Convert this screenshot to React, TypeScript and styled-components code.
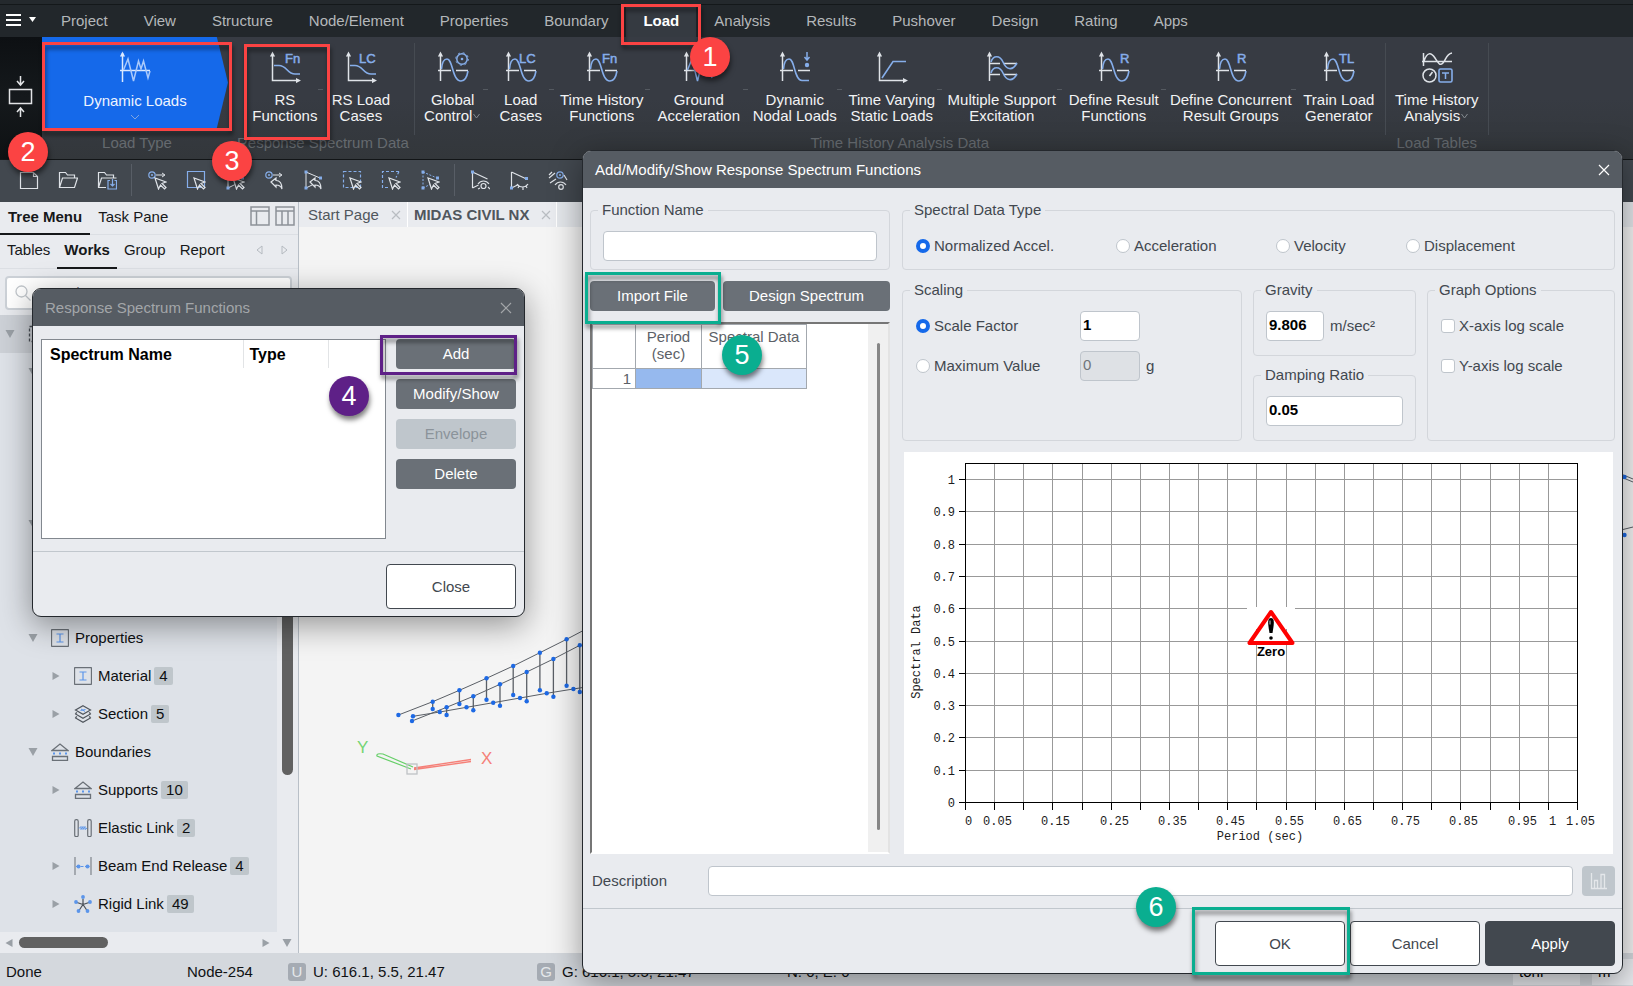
import React from "react";
import styled, { createGlobalStyle, css } from "styled-components";

const ink = "#42484f";
const pale = "#dfe3e8";
const blue = "#86aeea";
const linkBlue = "#5b95ea";

const GlobalStyle = createGlobalStyle`
  * { box-sizing: border-box; }
  body { margin: 0; font-family: "Liberation Sans", Arial, sans-serif; font-size: 15px; line-height: 18px; }
  button, input { font: inherit; }
  button { cursor: pointer; }
`;

/* ---------- shell ---------- */
const Shell = styled.div`
  position: relative;
  display: flex;
  flex-direction: column;
  min-height: 100vh;
  overflow: hidden;
  background: #f4f4f4;
`;

const MenuBar = styled.nav`
  display: flex;
  align-items: stretch;
  height: 37px;
  padding: 5px 0 0;
  background: #22272b;
  box-shadow: inset 0 4px 0 #24292d, inset 0 5px 0 #14181a;
`;

const MenuToggle = styled.button`
  display: flex;
  align-items: center;
  gap: 8px;
  width: 43px;
  padding: 0 0 3px 6px;
  border: 0;
  background: none;
`;

const MenuTab = styled.button<{ $active?: boolean }>`
  padding: 0 18px 1px;
  border: 0;
  background: ${(p) => (p.$active ? "#353a41" : "none")};
  color: ${(p) => (p.$active ? "#ffffff" : "#b4b7ba")};
  font-weight: ${(p) => (p.$active ? 700 : 400)};
  ${(p) => p.$active && css`padding: 0 17px 1px;`}
`;

const Ribbon = styled.div`
  display: flex;
  height: 123px;
  border-bottom: 1px solid #121517;
  background: linear-gradient(#373b43 0 50%, #33373b);
`;

const RibbonHandle = styled.button`
  width: 42px;
  padding: 0;
  border: 0;
  background: linear-gradient(#0d1013, #15191c 50%, #0e1113);
`;

const RibbonGroup = styled.section<{ $pad?: number }>`
  display: flex;
  flex-direction: column;
  align-items: center;
  padding: 0 ${(p) => p.$pad ?? 3}px;
`;

const RibbonRow = styled.div`
  display: flex;
  height: 97px;
`;

const GroupLabel = styled.div`
  color: #656a6f;
`;

const RibbonRule = styled.div`
  width: 1px;
  height: 92px;
  margin-top: 6px;
  background: #464b52;
`;

const RibbonItem = styled.button<{ $w: number; $last?: boolean }>`
  position: relative;
  display: flex;
  flex-direction: column;
  align-items: center;
  gap: 9px;
  width: ${(p) => p.$w}px;
  padding: 14px 0 0;
  border: 0;
  background: none;
  color: #f2f3f4;
  line-height: 16px;
  white-space: nowrap;
  &::after {
    content: "";
    position: absolute;
    right: 0;
    top: 52px;
    width: 5px;
    height: 1px;
    background: ${(p) => (p.$last ? "none" : "#555a61")};
  }
`;

const LoadType = styled.button`
  display: flex;
  flex-direction: column;
  align-items: center;
  width: 186px;
  height: 91px;
  margin-right: 4px;
  padding: 14px 0 0;
  border: 0;
  background: #1569ea;
  clip-path: polygon(0 0, 94% 0, 100% 50%, 94% 100%, 0 100%);
  color: #eef4ff;
  span { margin: 9px 0 4px; }
`;

const ToolBar = styled.div`
  display: flex;
  align-items: center;
  height: 42px;
  padding: 0 0 2px 9px;
  background: #42484f;
`;

const ToolButton = styled.button`
  width: 39px;
  height: 30px;
  padding: 0;
  border: 0;
  background: none;
  svg { display: block; margin: auto; }
`;

const ToolRule = styled.div`
  width: 1px;
  height: 32px;
  margin: 0 5px;
  background: #585e66;
`;

const Workspace = styled.div`
  display: flex;
  flex: 1;
  min-height: 0;
`;

/* ---------- sidebar ---------- */
const Sidebar = styled.aside`
  display: flex;
  flex-direction: column;
  width: 299px;
  border-right: 1px solid #b8bfc7;
  background: #e9ebef;
`;

const PaneTabs = styled.div<{ $h: number }>`
  display: flex;
  height: ${(p) => p.$h}px;
  box-shadow: inset 0 -1px 0 #dcdfe4;
`;

const PaneTab = styled.button<{ $active?: boolean; $pad: number }>`
  padding: 0 ${(p) => p.$pad}px 2px;
  border: 0;
  border-bottom: 2px solid ${(p) => (p.$active ? "#16181a" : "transparent")};
  background: none;
  color: #16181a;
  font-weight: ${(p) => (p.$active ? 700 : 400)};
`;

const PaneTools = styled.div<{ $gap: number; $end: number }>`
  display: flex;
  align-items: center;
  gap: ${(p) => p.$gap}px;
  margin: 0 ${(p) => p.$end}px 5px auto;
`;

const SearchBox = styled.label`
  display: flex;
  align-items: center;
  gap: 6px;
  height: 34px;
  margin: 7px 6px 5px 5px;
  padding: 0 8px;
  border: 2px solid #ccd1d7;
  border-radius: 4px;
  background: #fff;
  input { flex: 1; min-width: 0; padding: 0; border: 0; outline: 0; }
  input::placeholder { color: #70767d; }
`;

const TreeArea = styled.div`
  display: flex;
  flex: 1;
`;

const Tree = styled.ul`
  flex: 1;
  margin: 0;
  padding: 0;
  background: #dee2e8;
  list-style: none;
`;

const TreeRow = styled.li<{ $level: number; $selected?: boolean }>`
  display: flex;
  align-items: center;
  height: 38px;
  padding-left: ${(p) => 4 + p.$level * 23}px;
  background: ${(p) => (p.$selected ? "#cdd1d7" : "none")};
  color: #0e1012;
`;

const TreeToggle = styled.span`
  display: flex;
  justify-content: center;
  width: 12px;
  margin-right: 12px;
`;

const TreeIcon = styled.span`
  display: flex;
  width: 20px;
  margin-right: 4px;
`;

const Count = styled.span`
  margin-left: 3px;
  padding: 0 5px;
  border-radius: 2px;
  background: #bfc6cb;
`;

const TrackY = styled.div`
  display: flex;
  justify-content: flex-end;
  width: 21px;
  padding-right: 5px;
`;

const ThumbY = styled.div`
  width: 11px;
  height: 460px;
  border-radius: 6px;
  background: #616161;
`;

const TrackX = styled.div`
  display: flex;
  align-items: center;
  height: 21px;
  padding: 0 6px 0 4px;
`;

const ThumbX = styled.div`
  width: 89px;
  height: 11px;
  margin: 0 auto 0 5px;
  border-radius: 6px;
  background: #616161;
`;

const ScrollEnds = styled.div`
  display: flex;
  align-items: center;
  gap: 11px;
`;

/* ---------- document area ---------- */
const Main = styled.main`
  display: flex;
  flex: 1;
  flex-direction: column;
  min-width: 0;
`;

const DocTabs = styled.div`
  display: flex;
  height: 25px;
  background: #e4e7eb;
`;

const DocTab = styled.button<{ $active?: boolean }>`
  display: flex;
  align-items: center;
  gap: 12px;
  padding: 0 6px 0 9px;
  border: 0;
  border-right: 1px solid #fff;
  background: #e9ebef;
  color: #50565d;
  font-weight: ${(p) => (p.$active ? 700 : 400)};
  white-space: nowrap;
  ${(p) => p.$active && css`padding: 0 5px 0 6px;`}
`;

const Canvas = styled.div`
  display: flex;
  justify-content: space-between;
  flex: 1;
  background: #f4f4f4;
`;

const StatusBar = styled.footer`
  display: grid;
  grid-template-columns: 181px 101px 249px 250px 1fr auto;
  align-items: center;
  height: 33px;
  padding: 4px 0 0 6px;
  background: #d4d8dd;
  color: #101214;
  white-space: nowrap;
`;

const StatusItem = styled.div`
  display: flex;
  align-items: center;
  gap: 7px;
`;

const KeyCap = styled.span`
  width: 18px;
  border-radius: 3px;
  background: #a5abb3;
  color: #e4e7ea;
  text-align: center;
`;

const UnitPicker = styled.button<{ $w: number }>`
  width: ${(p) => p.$w}px;
  height: 26px;
  margin-left: 5px;
  border: 0;
  background: #e9ebef;
  text-align: left;
`;

/* ---------- dialogs ---------- */
const Dialog = styled.section<{ $top: number; $left: number; $right?: number; $w?: number }>`
  position: absolute;
  top: ${(p) => p.$top}px;
  left: ${(p) => p.$left}px;
  ${(p) => (p.$w ? `width: ${p.$w}px;` : `right: ${p.$right}px;`)}
  border: 1px solid #24282d;
  border-radius: 9px;
  background: #e9ebef;
  box-shadow: 0 8px 32px rgba(0, 0, 0, 0.4);
  color: ${ink};
`;

const TitleBar = styled.header<{ $idle?: boolean }>`
  display: flex;
  align-items: center;
  justify-content: space-between;
  height: 37px;
  padding: 0 12px;
  border-radius: 8px 8px 0 0;
  background: #565c63;
  color: ${(p) => (p.$idle ? "#a3a6a9" : "#ffffff")};
  h2 { margin: 0; font-size: 15px; font-weight: 400; }
  button { display: flex; padding: 0; border: 0; background: none; color: inherit; }
`;

const Action = styled.button<{ $w?: number }>`
  height: 30px;
  ${(p) => (p.$w ? `width: ${p.$w}px;` : "flex: 1;")}
  border: 0;
  border-radius: 4px;
  background: #6a7077;
  color: #fff;
  &:disabled { background: #bfc6cc; color: #8b939a; }
`;

const DialogFooter = styled.footer<{ $end: number }>`
  display: flex;
  justify-content: flex-end;
  gap: 5px;
  padding: 12px ${(p) => p.$end}px 7px;
  border-top: 1px solid #c1c7cd;
`;

const FooterButton = styled.button<{ $primary?: boolean }>`
  width: 130px;
  height: 45px;
  border: 1px solid ${ink};
  border-radius: 4px;
  background: ${(p) => (p.$primary ? ink : "#fff")};
  color: ${(p) => (p.$primary ? "#fff" : ink)};
`;

const ListBody = styled.div`
  display: flex;
  gap: 10px;
  padding: 13px 8px 12px;
`;

const SpectrumList = styled.div`
  flex: 1;
  height: 200px;
  border: 1px solid #82888f;
  background: #fff;
`;

const SpectrumTable = styled.table`
  border-collapse: collapse;
  color: #000;
  font-size: 16px;
  th {
    height: 28px;
    padding: 1px 0 0 6px;
    border-right: 1px solid #e2e4e6;
    text-align: left;
  }
  th:first-child { width: 201px; padding-left: 8px; }
  th:nth-child(2) { width: 85px; }
`;

const Stack = styled.div`
  display: flex;
  flex-direction: column;
  gap: 10px;
  width: 120px;
  button { flex: none; }
`;

const SpectrumBody = styled.div`
  display: flex;
  gap: 12px;
  padding: 13px 7px 0;
`;

const LeftColumn = styled.div`
  display: flex;
  flex-direction: column;
  gap: 11px;
  width: 300px;
`;

const RightColumn = styled.div`
  display: flex;
  flex: 1;
  flex-direction: column;
  gap: 11px;
  min-width: 0;
`;

const Row = styled.div<{ $gap: number }>`
  display: flex;
  gap: ${(p) => p.$gap}px;
`;

const Group = styled.fieldset<{ $w?: number; $grow?: boolean; $bottom?: number }>`
  ${(p) => p.$w && `width: ${p.$w}px;`}
  ${(p) => p.$grow && "flex: 1;"}
  min-width: 0;
  margin: 0;
  padding: 12px 12px ${(p) => p.$bottom ?? 8}px;
  border: 1px solid #d3d6db;
  border-radius: 4px;
  legend { margin-left: -5px; padding: 0 4px; }
`;

const TextBox = styled.input<{ $w?: number }>`
  width: ${(p) => (p.$w ? `${p.$w}px` : "100%")};
  height: 30px;
  padding: 0 2px 4px;
  border: 1px solid #bfc5cc;
  border-radius: 4px;
  outline: 0;
  background: #fff;
  color: #000;
  font-weight: 700;
  &:disabled { background: #dee1e5; color: #70757a; font-weight: 400; }
`;

const Choices = styled.div<{ $cols: string }>`
  display: grid;
  grid-template-columns: ${(p) => p.$cols};
  grid-auto-rows: 30px;
  row-gap: 10px;
  align-items: center;
`;

const Choice = styled.label`
  display: flex;
  align-items: center;
  gap: 4px;
  white-space: nowrap;
  input {
    appearance: none;
    width: 14px;
    height: 14px;
    margin: 0 0 0 1px;
    border: 1px solid #bfc5cc;
    border-radius: 3px;
    background: #fff;
  }
  input[type="radio"] { border-radius: 50%; }
  input[type="radio"]:checked { border: 4px solid #1569ea; }
`;

const Unit = styled.span`
  padding-left: 6px;
`;

const Column = styled.div`
  display: flex;
  flex-direction: column;
  gap: 10px;
  width: 163px;
`;

const InlineField = styled.div`
  display: flex;
  align-items: center;
`;

const DataPanel = styled.div`
  display: flex;
  justify-content: space-between;
  flex: 1;
  border: 2px solid;
  border-color: #767676 #e3e3e3 #fff #767676;
  background: #fff;
`;

const DataTable = styled.table`
  align-self: flex-start;
  border-collapse: collapse;
  color: #5c6167;
  line-height: 17px;
  th, td { padding: 0; border: 1px solid #a3a8ae; }
  th { height: 44px; padding-top: 3px; font-weight: 400; vertical-align: top; }
  td { height: 20px; }
  td:first-child { padding-right: 4px; text-align: right; }
`;

const Cell = styled.td<{ $tone: string }>`
  background: ${(p) => p.$tone};
`;

const PanelTrack = styled.div`
  display: flex;
  justify-content: center;
  width: 20px;
  padding: 19px 0 22px;
  background: #f0f0f0;
  &::before { content: ""; width: 3px; border-radius: 2px; background: #868686; }
`;

const ChartFrame = styled.div`
  margin: 0 2px;
  background: #fff;
  svg { display: block; width: 100%; }
`;

const DescriptionRow = styled.div`
  display: flex;
  align-items: center;
  margin: 12px 7px;
  label { width: 118px; padding-left: 2px; }
  input { flex: 1; }
`;

const PlotButton = styled.button`
  display: flex;
  align-items: center;
  justify-content: center;
  width: 33px;
  height: 30px;
  margin-left: 9px;
  border: 0;
  border-radius: 4px;
  background: #bfc6cc;
`;

/* ---------- step markers ---------- */
const Frame = styled.div<{ $x: number; $y: number; $w: number; $h: number; $c: string; $fromRight?: boolean }>`
  position: absolute;
  z-index: 1;
  top: ${(p) => p.$y}px;
  ${(p) => (p.$fromRight ? "right" : "left")}: ${(p) => p.$x}px;
  width: ${(p) => p.$w}px;
  height: ${(p) => p.$h}px;
  border: 3px solid ${(p) => p.$c};
  filter: drop-shadow(1px 4px 2px rgba(0, 0, 0, 0.5));
  pointer-events: none;
`;

const Step = styled.div<{ $x: number; $y: number; $c: string; $fromRight?: boolean }>`
  position: absolute;
  z-index: 2;
  top: ${(p) => p.$y}px;
  ${(p) => (p.$fromRight ? "right" : "left")}: ${(p) => p.$x}px;
  width: 40px;
  height: 40px;
  border-radius: 50%;
  background: ${(p) => p.$c};
  box-shadow: 1px 4px 5px rgba(0, 0, 0, 0.5);
  color: #fff;
  font-size: 27px;
  line-height: 40px;
  text-align: center;
`;

const RED = "#fb4343";
const PURPLE = "#5e2087";
const TEAL = "#0aae90";

/* ---------- drawings ---------- */
const Svg = ({ size = 32, h, children }: { size?: number; h?: number; children: React.ReactNode }) => (
  <svg width={size} height={h ?? size} viewBox={`0 0 ${size} ${h ?? size}`} fill="none" aria-hidden="true">
    {children}
  </svg>
);

const Tag = ({ x, t }: { x: number; t: string }) => (
  <text x={x} y="12" fontSize="13" fontFamily="Liberation Sans, Arial, sans-serif" fill={blue} stroke={blue} strokeWidth="0.5">
    {t}
  </text>
);

const UpAxis = () => (
  <>
    <path d="M3.5 3v27" stroke={pale} strokeWidth="1.5" />
    <path d="M3.5 0.5l2.6 5H0.9z" fill={pale} />
  </>
);

const CornerAxis = () => (
  <>
    <path d="M3.5 3v26.500H28" stroke={pale} strokeWidth="1.5" />
    <path d="M3.5 0.5l2.6 5H0.9zM32 29.500l-5 -2.600v5.200z" fill={pale} />
  </>
);

const Wave = ({ end = "M4.500 18C5 12 7 8 10 8c6 0 5 22 14 22c4 0 6-4 7-10" }: { end?: string }) => (
  <>
    <UpAxis />
    <path d="M1 19.500h13M19 19.500h12" stroke={pale} strokeWidth="1.5" />
    <path d={end} stroke={blue} strokeWidth="1.6" />
  </>
);

const Spike = () => (
  <>
    <path d="M3.500 2v29M1 19.500h30" stroke="#dbe9ff" strokeWidth="1.500" />
    <path d="M3.500 0.500l2.600 5H0.900z" fill="#dbe9ff" />
    <path d="M4.500 19L9 8l5.500 22 5-20 2.500 8 2.500-8 4.500 17 2-7" stroke="#a9c9fb" strokeWidth="1.500" />
  </>
);

const icons: Record<string, React.ReactNode> = {
  rsFn: <><CornerAxis /><path d="M5 14.500h5c8 0 8 8.500 16 8.500h5" stroke={blue} strokeWidth="1.600" /><Tag x={16} t="Fn" /></>,
  rsLc: <><CornerAxis /><path d="M5 14.500h5c8 0 8 8.500 16 8.500h5" stroke={blue} strokeWidth="1.600" /><Tag x={14} t="LC" /></>,
  gear: <><Wave /><circle cx="25" cy="8" r="5.200" stroke={blue} strokeWidth="1.500" /><circle cx="25" cy="8" r="6.300" stroke={blue} strokeWidth="1" strokeDasharray="2 2.950" /><circle cx="25" cy="8" r="1.300" fill={blue} /></>,
  lc: <><Wave /><Tag x={14} t="LC" /></>,
  fn: <><Wave /><Tag x={16} t="Fn" /></>,
  ground: <><UpAxis /><path d="M1 19.500h30" stroke={pale} strokeWidth="1.500" /><path d="M4.500 19L9 8l5.500 22 5-20 2.500 8 2.500-8 4.500 17" stroke={blue} strokeWidth="1.500" /></>,
  nodal: <><Wave end="M4.500 18C5 12 7 8 10 8c6 0 5 21.500 13 21.500h7" /><path d="M28 1v7M25.500 6l2.500 3 2.500-3" stroke={blue} strokeWidth="1.500" /><circle cx="28" cy="14" r="2.200" fill={blue} /></>,
  varying: <><CornerAxis /><path d="M6 27L17 10.500h13" stroke={blue} strokeWidth="1.600" /></>,
  multi: <><UpAxis /><path d="M3 12.500h11M18 12.500h13M3 23.500h11M18 23.500h13" stroke={pale} strokeWidth="1.500" /><path d="M5 11C7 4 14 4 17 11s9 10 14 1M5 22c2-7 9-7 12 0s9 10 14 1" stroke={blue} strokeWidth="1.600" /></>,
  r: <><Wave /><Tag x={22} t="R" /></>,
  tl: <><Wave /><Tag x={16} t="TL" /></>,
  table: <><path d="M2.500 2v13M1 10.500h30M3 10C6 1 10 1 14 7s5 8 8 5 3-9 9-10" stroke={pale} strokeWidth="1.500" /><circle cx="8.500" cy="24.500" r="6.500" stroke={pale} strokeWidth="1.500" /><path d="M8.500 25l3-4" stroke={pale} strokeWidth="1.500" /><rect x="18" y="18" width="13" height="13" rx="1.500" stroke={blue} strokeWidth="1.600" /><path d="M21 22h7M24.500 22v6" stroke={blue} strokeWidth="1.500" /></>,
};

const ribbonItems = (defs: [string, string, string, number, boolean?][]) =>
  defs.map(([icon, a, b, w, drop], i) => (
    <RibbonItem key={icon + a} $w={w} $last={i === defs.length - 1}>
      <Svg>{icons[icon]}</Svg>
      <span>
        {a}
        <br />
        {b}
        {drop && <Svg size={9} h={8}><path d="M1.500 1l3 4 3-4" stroke="#858a90" /></Svg>}
      </span>
    </RibbonItem>
  ));

const Cursor = () => <path d="M8 8l3.500 11 2-4 4 4 1.500-1.500-4-4 4-1.500z" stroke={pale} strokeWidth="1.200" fill="#42484f" />;
const BackArrow = () => <path d="M7 12l5-4v2.500c5 0 6 4 6 8.500-1-3-3-4-6-4v2z" stroke={pale} strokeWidth="1.200" fill="#42484f" />;
const Ring = ({ x = 5, y = 5 }: { x?: number; y?: number }) => (
  <><circle cx={x} cy={y} r="3.200" stroke={blue} strokeWidth="1.200" /><circle cx={x} cy={y} r="1" fill={blue} /></>
);
const Dots = ({ dash }: { dash?: boolean }) => (
  <><path d="M3 2v16M3 2l14 6M3 18l8-4" stroke={dash ? blue : pale} strokeDasharray={dash ? "2 1.500" : undefined} /><path d="M1.500 0.500h3v3h-3zM16 6.500h3v3h-3zM1.500 16.500h3v3h-3z" fill={blue} /></>
);

const toolIcons: React.ReactNode[] = [
  <path d="M1.500 2.500h13l4 4v12h-17zM14.500 2.500v4h4" stroke={pale} strokeWidth="1.200" />,
  <path d="M1.500 17.500v-15h6l2 2.500h7v3M1.500 17.500l3-9.500h15l-3 9.500z" stroke={pale} strokeWidth="1.200" />,
  <><path d="M9 17.500H1.500v-15h6l2 2.500h7v3M1.500 17.500l3-9.500h15" stroke={pale} strokeWidth="1.200" /><path d="M13 10.500h-2v8.500h8.500v-8.500h-2M15.500 9v7M13.500 14l2 2 2-2" stroke={blue} strokeWidth="1.200" /></>,
  "rule",
  <><Ring /><path d="M9 5h8M15 3l3 2-3 2" stroke={pale} /><Cursor /></>,
  <><path d="M1.500 1.500h17v16h-17z" stroke={blue} strokeWidth="1.200" /><Cursor /></>,
  <><Dots /><Cursor /></>,
  <><Ring /><path d="M9 5h8M15 3l3 2-3 2" stroke={pale} /><BackArrow /></>,
  <><Dots /><BackArrow /></>,
  <><path d="M1.500 1.500h17v16h-17z" stroke={blue} strokeWidth="1.200" strokeDasharray="3 2" /><Cursor /></>,
  <><path d="M18 1.500H1.500v16H9M18 1.500l-3 6" stroke={blue} strokeWidth="1.200" strokeDasharray="3 2" /><Cursor /></>,
  <><Dots dash /><Cursor /></>,
  "rule",
  <><path d="M2.500 2v16M2.500 2l15 7M2.500 18l6-3M8 14c3-4 8-4 11 0M10 18l-2 1M18 17l2 2" stroke={pale} strokeWidth="1.200" /><circle cx="13.500" cy="16" r="2.500" stroke={pale} strokeWidth="1.200" /><path d="M1 0.500h3v3H1z" fill={blue} /></>,
  <><path d="M2.500 2v16M2.500 2l15 7M2.500 18l6-3M8 14c3 4 8 4 11 0M10 16l-1 2M14 17v3M17 16l1 2" stroke={pale} strokeWidth="1.200" /><path d="M16 7h3v3h-3zM1 16.500h3v3H1z" fill={blue} /></>,
  <><Ring x={12} /><path d="M1 8l6-5M2 13l6-4M1 5l3-3M7 15c3-4 8-4 11 0M16 5l3 5" stroke={pale} strokeWidth="1.200" /><circle cx="13" cy="17" r="2.300" stroke={pale} strokeWidth="1.200" /></>,
];

const treeIcons: Record<string, React.ReactNode> = {
  beam: <><rect x="0.500" y="0.500" width="17" height="17" rx="1" stroke="#6a7077" strokeWidth="1.300" /><path d="M5.500 5h7M9 5v8M5.500 13h7" stroke={linkBlue} strokeWidth="1.200" /></>,
  section: <><path d="M9 0.700l7.500 4.300L9 9.300 1.500 5zM1.500 8.500v0.500L9 13.300 16.500 9v-0.500M1.500 8.500L3 7.500M16.500 8.500L15 7.500M1.500 12.500v0.500L9 17.300 16.500 13v-0.500M1.500 12.500l1.500-1M16.500 12.500l-1.500-1" stroke="#4f555c" strokeWidth="1.200" /><path d="M6.500 5.500l5-1M7 4l4 2.500" stroke={linkBlue} /></>,
  support: <><path d="M1 7.500L9 1l8 6.500zM1.500 13.500h15v4h-15z" stroke="#6a7077" strokeWidth="1.300" /><path d="M2 10.500h14" stroke={linkBlue} strokeWidth="2" strokeDasharray="2 4" /></>,
  elastic: <><rect x="0.700" y="0.700" width="3.500" height="17" rx="1.500" stroke="#6a7077" strokeWidth="1.200" /><rect x="13.700" y="0.700" width="3.500" height="17" rx="1.500" stroke="#6a7077" strokeWidth="1.200" /><path d="M5 9.500l2-2v3l2-3v3l2-3v3l2-1.500" stroke={linkBlue} /></>,
  release: <><path d="M1 0v18M17 0v18" stroke="#868c93" strokeWidth="1.300" /><path d="M2 9.500h14" stroke={linkBlue} strokeDasharray="3 1.500" /><circle cx="4.500" cy="9.500" r="2" fill={linkBlue} /><circle cx="13.500" cy="9.500" r="2" fill={linkBlue} /></>,
  rigid: <><path d="M9 9.500V4M9 9.500L3 7.500M9 9.500l6-2M9 9.500l-4 6M9 9.500l4 6" stroke="#4a5057" strokeWidth="1.200" />{[[9, 2], [2, 7], [16, 7], [4.5, 16], [13.5, 16]].map(([x, y]) => <circle key={`${x}-${y}`} cx={x} cy={y} r="1.900" fill={linkBlue} />)}</>,
  group: <path d="M1.500 1.500h15v15h-15z" stroke="#4a5057" strokeWidth="1.300" strokeDasharray="3 2" />,
};

type Node = { level: number; icon?: string; text?: string; count?: number; open?: boolean; shut?: boolean; selected?: boolean };
const nodes: Node[] = [
  { level: 0, open: true, icon: "group", selected: true },
  { level: 1, open: true },
  { level: 2 },
  { level: 2 },
  { level: 2 },
  { level: 1, open: true },
  { level: 2 },
  { level: 2 },
  { level: 1, open: true, icon: "beam", text: "Properties" },
  { level: 2, shut: true, icon: "beam", text: "Material", count: 4 },
  { level: 2, shut: true, icon: "section", text: "Section", count: 5 },
  { level: 1, open: true, icon: "support", text: "Boundaries" },
  { level: 2, shut: true, icon: "support", text: "Supports", count: 10 },
  { level: 2, icon: "elastic", text: "Elastic Link", count: 2 },
  { level: 2, shut: true, icon: "release", text: "Beam End Release", count: 4 },
  { level: 2, shut: true, icon: "rigid", text: "Rigid Link", count: 49 },
];

const Triangle = ({ dir }: { dir: "down" | "right" | "left" }) => (
  <Svg size={10}>
    <path d={{ down: "M0.500 1h9L5 9z", right: "M1.500 1v8l7-4z", left: "M8.500 1v8l-7-4z" }[dir]} fill="#9aa0a6" />
  </Svg>
);

const Cross = ({ size = 12, color = "currentColor" }: { size?: number; color?: string }) => (
  <Svg size={size}>
    <path d={`M1 1L${size - 1} ${size - 1}M${size - 1} 1L1 ${size - 1}`} stroke={color} strokeWidth="1.200" />
  </Svg>
);

const top1 = [[99.4, 488], [133.7, 474.7], [160.4, 463.3], [187.5, 451.3], [214.2, 439], [240.9, 425.7], [267.6, 412.3], [290, 400.5]];
const top2 = [[113, 494], [147.6, 480.3], [174.3, 469.3], [201, 457.3], [227.7, 445], [254.4, 432], [280.8, 418.3]];
const base = [[114, 489.3], [140.8, 485], [167.5, 480.3], [194.2, 475.7], [221, 471], [247.7, 466.3], [274.4, 462], [290, 459.5]];
const foot1 = [482, 477, 472.7, 468, 463.3, 458.7];
const foot2 = [488, 483.3, 478.7, 474.3, 469.7, 465];

const Model = () => {
  const legs = [
    ...foot1.map((y, i) => [top1[i + 1][0], top1[i + 1][1], y]),
    ...foot2.map((y, i) => [top2[i + 1][0], top2[i + 1][1], y]),
  ];
  return (
    <svg width="300" height="600" viewBox="0 0 300 600" fill="none" role="img" aria-label="Bridge model">
      {[top1, top2, base].map((line, i) => (
        <polyline key={i} points={line.map((p) => p.join()).join(" ")} stroke="#5a5f66" />
      ))}
      {legs.map(([x, a, b]) => <path key={x} d={`M${x} ${a}V${b}`} stroke="#5a5f66" strokeWidth="1.300" />)}
      {[...top1, ...top2, ...base, ...legs.map(([x, , b]) => [x, b])].map(([x, y]) => (
        <circle key={`${x}-${y}`} cx={x} cy={y} r="2.200" fill="#1d69e4" />
      ))}
      <path d="M112 542L78 529q-1-3 6-2l30 13" stroke="#66cf68" strokeWidth="1.200" />
      <path d="M115 541l57-8.500M115 542.500l57-8" stroke="#f58078" strokeWidth="1.300" />
      <rect x="108" y="537" width="10" height="10" stroke="#bfc2c5" strokeWidth="1.300" />
      <text x="58" y="526" fontSize="17" fill="#74d474">Y</text>
      <text x="182" y="537" fontSize="17" fill="#f58078">X</text>
    </svg>
  );
};

const Chart = () => {
  const x = (i: number) => Math.round(61 + (i * 612) / 21) + 0.5;
  const y = (i: number) => Math.round(350 - i * 32.3) + 0.5;
  const cols = Array.from({ length: 22 }, (_, i) => i);
  const rows = Array.from({ length: 11 }, (_, i) => i);
  const labelled = cols.filter((i) => i === 0 || i === 20 || i % 2 === 1);
  return (
    <svg viewBox="0 0 709 402" fill="none" fontFamily="Liberation Mono, monospace" fontSize="12" role="img" aria-label="Spectral data chart">
      {cols.map((i) => <path key={i} d={`M${x(i)} 11.500V350`} stroke="#999" />)}
      {rows.map((i) => <path key={i} d={`M61.500 ${y(i)}H673`} stroke="#999" />)}
      {cols.map((i) => <path key={i} d={`M${x(i)} 350v8`} stroke="#000" />)}
      {rows.map((i) => <path key={i} d={`M55 ${y(i)}h6`} stroke="#000" />)}
      <rect x="61.500" y="11.500" width="612" height="339" stroke="#000" />
      <g fill="#1c1c1c">
        {labelled.map((i) => (
          <text key={i} x={x(i) + (i === 20 ? 4 : 3)} y="373" textAnchor="middle">{i * 5 / 100}</text>
        ))}
        {rows.map((i) => <text key={i} x="51" y={y(i) + 4} textAnchor="end">{i / 10}</text>)}
        <text x="356" y="388" textAnchor="middle">Period (sec)</text>
        <text x="16" y="200" textAnchor="middle" transform="rotate(-90 16 200)">Spectral Data</text>
      </g>
      <path d="M343 155h48v22h-10v36h-28v-36h-10z" fill="#fff" />
      <path d="M353 177v-2h28v2z" fill="#fff" />
      <path d="M367 160l-21.500 31h43z" fill="#fff" stroke="#f00" strokeWidth="4" strokeLinejoin="round" />
      <path d="M367 166c4 0 3 6 1.500 15h-3c-1.500-9-2.500-15 1.500-15z" fill="#000" />
      <path d="M366 168.500v4" stroke="#fff" strokeWidth="0.800" />
      <circle cx="367" cy="186" r="1.800" fill="#000" />
      <text x="367" y="204" textAnchor="middle" fontFamily="Liberation Sans, Arial, sans-serif" fontSize="13" fontWeight="700" fill="#000">Zero</text>
    </svg>
  );
};

const ListDialog = () => (
  <Dialog $top={288} $left={32} $w={493} aria-label="Response Spectrum Functions">
    <TitleBar $idle>
      <h2>Response Spectrum Functions</h2>
      <button aria-label="Close"><Cross /></button>
    </TitleBar>
    <ListBody>
      <SpectrumList>
        <SpectrumTable>
          <thead>
            <tr><th>Spectrum Name</th><th>Type</th></tr>
          </thead>
        </SpectrumTable>
      </SpectrumList>
      <Stack>
        <Action $w={120}>Add</Action>
        <Action $w={120}>Modify/Show</Action>
        <Action $w={120} disabled>Envelope</Action>
        <Action $w={120}>Delete</Action>
      </Stack>
    </ListBody>
    <DialogFooter $end={8}>
      <FooterButton>Close</FooterButton>
    </DialogFooter>
    <Frame $x={347} $y={46} $w={137} $h={40} $c={PURPLE} />
    <Step $x={296} $y={87} $c={PURPLE}>4</Step>
  </Dialog>
);

const SpectrumDialog = () => (
  <Dialog $top={150} $left={582} $right={10} aria-label="Add/Modify/Show Response Spectrum Functions">
    <TitleBar>
      <h2>Add/Modify/Show Response Spectrum Functions</h2>
      <button aria-label="Close"><Cross /></button>
    </TitleBar>
    <SpectrumBody>
      <LeftColumn>
        <Group>
          <legend>Function Name</legend>
          <TextBox aria-label="Function Name" />
        </Group>
        <Row $gap={8}>
          <Action $w={125}>Import File</Action>
          <Action>Design Spectrum</Action>
        </Row>
        <DataPanel>
          <DataTable>
            <colgroup>
              <col width="43" /><col width="66" /><col width="105" />
            </colgroup>
            <thead>
              <tr><th /><th>Period<br />(sec)</th><th>Spectral Data</th></tr>
            </thead>
            <tbody>
              <tr><td>1</td><Cell $tone="#96b9ee" /><Cell $tone="#dae7fb" /></tr>
            </tbody>
          </DataTable>
          <PanelTrack />
        </DataPanel>
      </LeftColumn>
      <RightColumn>
        <Group>
          <legend>Spectral Data Type</legend>
          <Choices $cols="200px 160px 130px 1fr">
            <Choice><input type="radio" name="kind" defaultChecked />Normalized Accel.</Choice>
            <Choice><input type="radio" name="kind" />Acceleration</Choice>
            <Choice><input type="radio" name="kind" />Velocity</Choice>
            <Choice><input type="radio" name="kind" />Displacement</Choice>
          </Choices>
        </Group>
        <Row $gap={11}>
          <Group $grow>
            <legend>Scaling</legend>
            <Choices $cols="165px 60px 1fr">
              <Choice><input type="radio" name="scaling" defaultChecked />Scale Factor</Choice>
              <TextBox $w={60} defaultValue="1" aria-label="Scale Factor" />
              <span />
              <Choice><input type="radio" name="scaling" />Maximum Value</Choice>
              <TextBox $w={60} defaultValue="0" disabled aria-label="Maximum Value" />
              <Unit>g</Unit>
            </Choices>
          </Group>
          <Column>
            <Group $bottom={14}>
              <legend>Gravity</legend>
              <InlineField>
                <TextBox $w={58} defaultValue="9.806" aria-label="Gravity" />
                <Unit>m/sec²</Unit>
              </InlineField>
            </Group>
            <Group $bottom={14}>
              <legend>Damping Ratio</legend>
              <InlineField>
                <TextBox defaultValue="0.05" aria-label="Damping Ratio" />
              </InlineField>
            </Group>
          </Column>
          <Group $w={188}>
            <legend>Graph Options</legend>
            <Choices $cols="1fr">
              <Choice><input type="checkbox" />X-axis log scale</Choice>
              <Choice><input type="checkbox" />Y-axis log scale</Choice>
            </Choices>
          </Group>
        </Row>
        <ChartFrame><Chart /></ChartFrame>
      </RightColumn>
    </SpectrumBody>
    <DescriptionRow>
      <label htmlFor="description">Description</label>
      <TextBox id="description" />
      <PlotButton aria-label="Plot">
        <Svg size={18}><path d="M1.500 1v15.500H17M4.500 16.500v-8h3v8M11 16.500v-14h3.500v14" stroke="#e4e7ea" strokeWidth="1.300" /></Svg>
      </PlotButton>
    </DescriptionRow>
    <DialogFooter $end={7}>
      <FooterButton>OK</FooterButton>
      <FooterButton>Cancel</FooterButton>
      <FooterButton $primary>Apply</FooterButton>
    </DialogFooter>
    <Frame $x={2} $y={121} $w={136} $h={52} $c={TEAL} />
    <Step $x={139} $y={184} $c={TEAL}>5</Step>
    <Frame $x={272} $y={756} $w={158} $h={68} $c={TEAL} $fromRight />
    <Step $x={446} $y={736} $c={TEAL} $fromRight>6</Step>
  </Dialog>
);

const menus = ["Project", "View", "Structure", "Node/Element", "Properties", "Boundary", "Load", "Analysis", "Results", "Pushover", "Design", "Rating", "Apps"];

export default function App() {
  return (
    <Shell>
      <GlobalStyle />
      <MenuBar>
        <MenuToggle aria-label="Menu">
          <Svg size={15} h={12}><path d="M0 1h15M0 6h15M0 11h15" stroke="#fff" strokeWidth="2" /></Svg>
          <Svg size={7} h={10}><path d="M0 2h7L3.500 7z" fill="#fff" /></Svg>
        </MenuToggle>
        {menus.map((m) => <MenuTab key={m} $active={m === "Load"}>{m}</MenuTab>)}
      </MenuBar>
      <Ribbon>
        <RibbonHandle aria-label="Collapse ribbon">
          <Svg size={42} h={50}><path d="M9.500 18.500h22v14h-22zM20.500 5v8M17 10l3.500 4 3.500-4M20.500 46v-8M17 41l3.500-4 3.500 4" stroke="#e2e4e6" strokeWidth="1.500" /></Svg>
        </RibbonHandle>
        <RibbonGroup $pad={0}>
          <RibbonRow>
            <LoadType>
              <Svg>
                <Spike />
              </Svg>
              <span>Dynamic Loads</span>
              <Svg size={10} h={6}><path d="M1 1l4 4 4-4" stroke="#7fa5e0" /></Svg>
            </LoadType>
          </RibbonRow>
          <GroupLabel>Load Type</GroupLabel>
        </RibbonGroup>
        <RibbonGroup $pad={5}>
          <RibbonRow>{ribbonItems([["rsFn", "RS", "Functions", 76], ["rsLc", "RS Load", "Cases", 76]])}</RibbonRow>
          <GroupLabel>Response Spectrum Data</GroupLabel>
        </RibbonGroup>
        <RibbonRule />
        <RibbonGroup>
          <RibbonRow>
            {ribbonItems([
              ["gear", "Global", "Control", 70, true],
              ["lc", "Load", "Cases", 66],
              ["fn", "Time History", "Functions", 96],
              ["ground", "Ground", "Acceleration", 98],
              ["nodal", "Dynamic", "Nodal Loads", 94],
              ["varying", "Time Varying", "Static Loads", 100],
              ["multi", "Multiple Support", "Excitation", 120],
              ["r", "Define Result", "Functions", 104],
              ["r", "Define Concurrent", "Result Groups", 130],
              ["tl", "Train Load", "Generator", 86],
            ])}
          </RibbonRow>
          <GroupLabel>Time History Analysis Data</GroupLabel>
        </RibbonGroup>
        <RibbonRule />
        <RibbonGroup>
          <RibbonRow>{ribbonItems([["table", "Time History", "Analysis", 96, true]])}</RibbonRow>
          <GroupLabel>Load Tables</GroupLabel>
        </RibbonGroup>
        <RibbonRule />
      </Ribbon>
      <ToolBar>
        {toolIcons.map((icon, i) =>
          icon === "rule" ? <ToolRule key={i} /> : <ToolButton key={i} aria-label={`Tool ${i + 1}`}><Svg size={20}>{icon}</Svg></ToolButton>
        )}
      </ToolBar>
      <Workspace>
        <Sidebar>
          <PaneTabs $h={33}>
            <PaneTab $active $pad={8}>Tree Menu</PaneTab>
            <PaneTab $pad={8}>Task Pane</PaneTab>
            <PaneTools $gap={5} $end={3}>
              <Svg size={20}><path d="M1 1h18v18H1zM1 5h18M6.500 5v14" stroke="#8d9299" strokeWidth="1.500" /></Svg>
              <Svg size={20}><path d="M1 1h18v18H1zM1 5h18M7 5v14M13 5v14" stroke="#8d9299" strokeWidth="1.500" /></Svg>
            </PaneTools>
          </PaneTabs>
          <PaneTabs $h={34}>
            <PaneTab $pad={7}>Tables</PaneTab>
            <PaneTab $active $pad={7}>Works</PaneTab>
            <PaneTab $pad={7}>Group</PaneTab>
            <PaneTab $pad={7}>Report</PaneTab>
            <PaneTools $gap={14} $end={9}>
              <Svg size={10}><path d="M7 1v8L2 5z" stroke="#b5bac0" /></Svg>
              <Svg size={10}><path d="M3 1v8l5-4z" stroke="#b5bac0" /></Svg>
            </PaneTools>
          </PaneTabs>
          <SearchBox>
            <Svg size={16}><circle cx="6.500" cy="6.500" r="5.500" stroke="#c1c6cb" strokeWidth="1.300" /><path d="M10.500 10.500l5 5" stroke="#c1c6cb" strokeWidth="1.300" /></Svg>
            <input placeholder="Search" aria-label="Search" />
          </SearchBox>
          <TreeArea>
            <Tree>
              {nodes.map((n, i) => (
                <TreeRow key={i} $level={n.level} $selected={n.selected}>
                  <TreeToggle>{n.open ? <Triangle dir="down" /> : n.shut ? <Triangle dir="right" /> : null}</TreeToggle>
                  <TreeIcon>{n.icon && <Svg size={18}>{treeIcons[n.icon]}</Svg>}</TreeIcon>
                  {n.text}
                  {n.count && <Count>{n.count}</Count>}
                </TreeRow>
              ))}
            </Tree>
            <TrackY><ThumbY /></TrackY>
          </TreeArea>
          <TrackX>
            <Triangle dir="left" />
            <ThumbX />
            <ScrollEnds><Triangle dir="right" /><Triangle dir="down" /></ScrollEnds>
          </TrackX>
        </Sidebar>
        <Main>
          <DocTabs>
            <DocTab>Start Page<Cross size={10} color="#b9bdc2" /></DocTab>
            <DocTab $active>MIDAS CIVIL NX<Cross size={10} color="#b9bdc2" /></DocTab>
          </DocTabs>
          <Canvas>
            <Model />
            <svg width="12" height="320" viewBox="0 0 12 320" fill="none" aria-hidden="true">
              <path d="M0 247l12 5M0 250l12 5M0 303l12-3" stroke="#5a5f66" />
              <circle cx="3.500" cy="250" r="2.200" fill="#1d69e4" />
              <circle cx="3.500" cy="308" r="2.200" fill="#1d69e4" />
            </svg>
          </Canvas>
        </Main>
      </Workspace>
      <StatusBar>
        <StatusItem>Done</StatusItem>
        <StatusItem>Node-254</StatusItem>
        <StatusItem><KeyCap>U</KeyCap>U: 616.1, 5.5, 21.47</StatusItem>
        <StatusItem><KeyCap>G</KeyCap>G: 616.1, 5.5, 21.47</StatusItem>
        <StatusItem>N: 0, E: 0</StatusItem>
        <StatusItem>
          <UnitPicker $w={67}>tonf</UnitPicker>
          <UnitPicker $w={41}>m</UnitPicker>
        </StatusItem>
      </StatusBar>

      <ListDialog />
      <SpectrumDialog />

      <Frame $x={621} $y={4} $w={80} $h={41} $c={RED} />
      <Step $x={690} $y={37} $c={RED}>1</Step>
      <Frame $x={42} $y={42} $w={190} $h={89} $c={RED} />
      <Step $x={8} $y={132} $c={RED}>2</Step>
      <Frame $x={244} $y={44} $w={86} $h={96} $c={RED} />
      <Step $x={212} $y={141} $c={RED}>3</Step>
    </Shell>
  );
}
